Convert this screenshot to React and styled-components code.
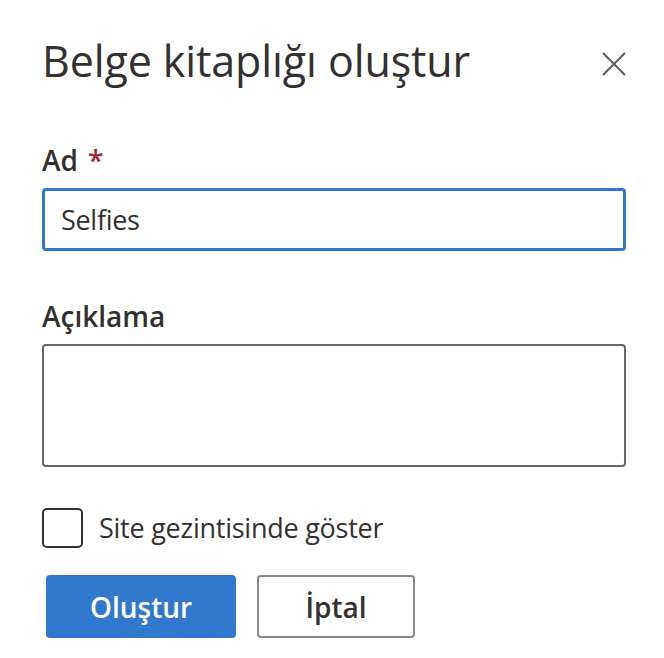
import React from "react";
import styled, { createGlobalStyle } from "styled-components";

const Global = createGlobalStyle`
  html, body { margin: 0; padding: 0; background: #ffffff; }
  body { font-family: "Open Sans", "Noto Sans", sans-serif; color: #323130; }
  * { box-sizing: border-box; }
`;

const Panel = styled.div`
  width: 664px;
  height: 658px;
  padding: 33px 38px 0 42px;
  display: flex;
  flex-direction: column;
`;

const Header = styled.div`
  display: flex;
  justify-content: space-between;
  align-items: flex-start;
`;

const Title = styled.h1`
  margin: 0;
  font-size: 43px;
  line-height: 56px;
  font-weight: 400;
  color: #323130;
  letter-spacing: -0.1px;
`;

const CloseButton = styled.button`
  margin-top: 19px;
  width: 24px;
  height: 24px;
  padding: 0;
  border: 0;
  background: transparent;
  display: flex;
  color: #605e5c;
`;

const Field = styled.div`
  display: flex;
  flex-direction: column;
  margin-top: ${(p) => p.$top}px;
`;

const Label = styled.label`
  font-size: 28px;
  line-height: 36px;
  font-weight: 600;
  color: #323130;
  margin-bottom: 10px;
  display: flex;
  gap: 10px;
`;

const Star = styled.span`
  color: #a4262c;
`;

const TextInput = styled.div`
  height: 63px;
  border: 3px solid #3078cd;
  border-radius: 4px;
  padding: 0 16px;
  display: flex;
  align-items: center;
  font-size: 27px;
  letter-spacing: -0.3px;
  color: #323130;
`;

const TextArea = styled.div`
  height: 123px;
  border: 2px solid #666666;
  border-radius: 4px;
`;

const CheckRow = styled.div`
  margin-top: 41px;
  display: flex;
  align-items: center;
  gap: 16px;
`;

const Box = styled.div`
  width: 41px;
  height: 40px;
  border: 2px solid #323130;
  border-radius: 5px;
`;

const CheckText = styled.span`
  font-size: 27px;
  line-height: 36px;
  letter-spacing: -0.25px;
  color: #323130;
`;

const Buttons = styled.div`
  margin-top: 27px;
  margin-left: 4px;
  display: flex;
  gap: 21px;
`;

const Btn = styled.button`
  height: 63px;
  width: ${(p) => p.$w}px;
  border-radius: 4px;
  font-family: inherit;
  font-size: 28px;
  line-height: 36px;
  font-weight: 600;
  padding: 0;
  background: ${(p) => (p.$primary ? "#3078cd" : "#ffffff")};
  color: ${(p) => (p.$primary ? "#ffffff" : "#323130")};
  border: ${(p) => (p.$primary ? "0" : "2px solid #8a8886")};
`;

export default function App() {
  return (
    <>
      <Global />
      <Panel>
        <Header>
          <Title>Belge kitaplığı oluştur</Title>
          <CloseButton aria-label="Kapat">
            <svg width="24" height="24" viewBox="0 0 24 24">
              <path d="M1 1 L23 23 M23 1 L1 23" stroke="currentColor" strokeWidth="2" fill="none" />
            </svg>
          </CloseButton>
        </Header>
        <Field $top={53}>
          <Label>
            Ad <Star>*</Star>
          </Label>
          <TextInput>Selfies</TextInput>
        </Field>
        <Field $top={47}>
          <Label>Açıklama</Label>
          <TextArea />
        </Field>
        <CheckRow>
          <Box />
          <CheckText>Site gezintisinde göster</CheckText>
        </CheckRow>
        <Buttons>
          <Btn $primary $w={190}>Oluştur</Btn>
          <Btn $w={158}>İptal</Btn>
        </Buttons>
      </Panel>
    </>
  );
}
